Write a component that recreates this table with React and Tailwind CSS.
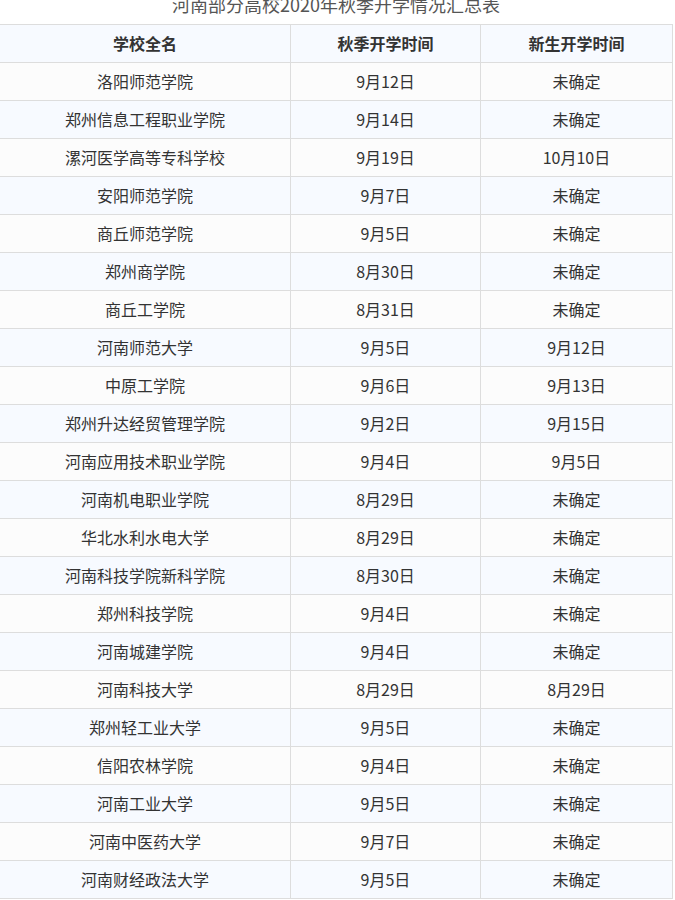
import React from 'react';

// 河南部分高校开学时间
const rows = [
  ['洛阳师范学院', '9月12日', '未确定'],
  ['郑州信息工程职业学院', '9月14日', '未确定'],
  ['漯河医学高等专科学校', '9月19日', '10月10日'],
  ['安阳师范学院', '9月7日', '未确定'],
  ['商丘师范学院', '9月5日', '未确定'],
  ['郑州商学院', '8月30日', '未确定'],
  ['商丘工学院', '8月31日', '未确定'],
  ['河南师范大学', '9月5日', '9月12日'],
  ['中原工学院', '9月6日', '9月13日'],
  ['郑州升达经贸管理学院', '9月2日', '9月15日'],
  ['河南应用技术职业学院', '9月4日', '9月5日'],
  ['河南机电职业学院', '8月29日', '未确定'],
  ['华北水利水电大学', '8月29日', '未确定'],
  ['河南科技学院新科学院', '8月30日', '未确定'],
  ['郑州科技学院', '9月4日', '未确定'],
  ['河南城建学院', '9月4日', '未确定'],
  ['河南科技大学', '8月29日', '8月29日'],
  ['郑州轻工业大学', '9月5日', '未确定'],
  ['信阳农林学院', '9月4日', '未确定'],
  ['河南工业大学', '9月5日', '未确定'],
  ['河南中医药大学', '9月7日', '未确定'],
  ['河南财经政法大学', '9月5日', '未确定'],
];

const Row = ({ cells, header, shaded }) => (
  <div
    className={`grid grid-cols-[291px_190px_192px] h-[38px] border-b border-[#dddddd] ${
      shaded ? 'bg-[#f7faff]' : 'bg-[#fcfcfc]'
    }`}
  >
    {cells.map((c, i) => (
      <div
        key={i}
        className={`flex items-center justify-center pb-[2px] border-r border-[#dddddd] text-[16px] text-[#333333] ${
          header ? 'font-bold' : ''
        }`}
      >
        {c}
      </div>
    ))}
  </div>
);

const App = () => {
  return (
    <div className="min-h-screen bg-white" style={{ fontFamily: '"Noto Sans CJK SC", "Noto Sans", sans-serif' }}>
      <div className="w-[674px] -ml-px">
        {/* --- TITLE (cut at the top) --- */}
        <div className="h-[24px] text-center text-[18px] leading-[8px] text-[#555555]">
          河南部分高校2020年秋季开学情况汇总表
        </div>

        {/* --- TABLE --- */}
        <div className="border-t border-l border-[#dddddd]">
          <Row cells={['学校全名', '秋季开学时间', '新生开学时间']} header shaded />
          {rows.map((r, i) => (
            <Row key={i} cells={r} shaded={i % 2 === 1} />
          ))}
        </div>
      </div>
    </div>
  );
};

export default App;
